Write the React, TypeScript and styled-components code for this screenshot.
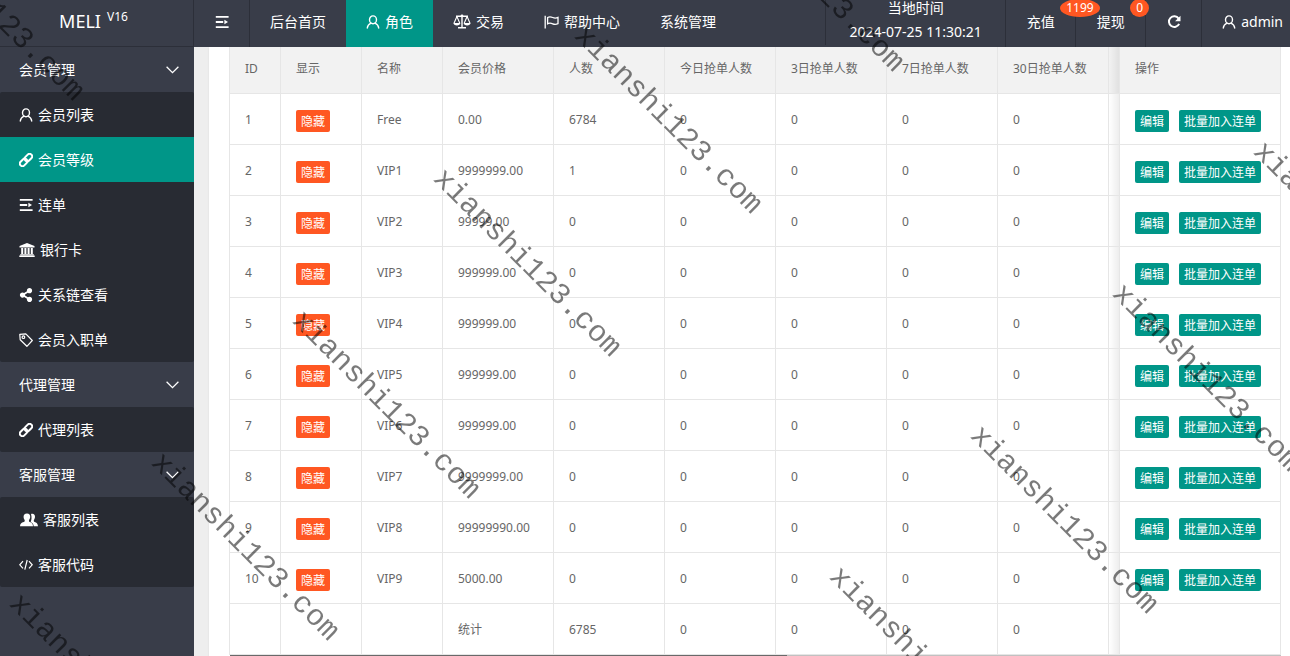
import React from "react";
import styled, { createGlobalStyle, css } from "styled-components";
import { FaShareAlt } from "react-icons/fa";

const GlobalStyle = createGlobalStyle`
  *, *::before, *::after { box-sizing: border-box; }
  body {
    margin: 0;
    background: #eeeeee;
    color: #666666;
    font: 14px/24px "Noto Sans", "Noto Sans CJK SC", sans-serif;
    overflow: hidden;
  }
  button { font: inherit; border: 0; margin: 0; padding: 0; cursor: pointer; }
  a { color: inherit; text-decoration: none; }
`;

const Shell = styled.div`
  display: grid;
  grid-template: 47px minmax(0, 1fr) / 194px minmax(0, 1fr);
  height: 100vh;
`;

const Logo = styled.h1`
  display: flex;
  justify-content: center;
  margin: 0;
  padding-right: 6px;
  background: #393d49;
  border-right: 1px solid #2c2f39;
  border-bottom: 1px solid #2c2f39;
  color: #ffffff;
  font-size: 18px;
  font-weight: 400;
  line-height: 42px;
  gap: 6px;
`;

const Version = styled.small`
  font-size: 12px;
  line-height: 33px;
`;

const TopBar = styled.header`
  display: flex;
  justify-content: space-between;
  background: #393d49;
  color: #ffffff;
`;

const BarGroup = styled.nav`
  display: flex;
`;

const iconTextCss = css`
  display: flex;
  align-items: center;
  svg { flex: none; }
`;

const NavLink = styled.a<{ $active?: boolean }>`
  ${iconTextCss}
  gap: 5px;
  padding: 0 20px 4px;
  background: ${(p) => (p.$active ? "#009688" : "transparent")};
  white-space: nowrap;
`;

const IconButton = styled.button<{ $side: "left" | "right" }>`
  display: flex;
  align-items: center;
  justify-content: center;
  width: 56px;
  padding-bottom: 4px;
  background: transparent;
  color: #ffffff;
  border-${(p) => p.$side}: 1px solid #2c2f39;
`;

const Clock = styled.div`
  display: flex;
  flex-direction: column;
  align-items: center;
  justify-content: center;
  width: 180px;
  height: 45px;
  padding-bottom: 5px;
  border-left: 1px solid #2c2f39;
  white-space: nowrap;
`;

const CountLink = styled.a`
  position: relative;
  display: flex;
  align-items: center;
  justify-content: center;
  width: 70px;
  padding-bottom: 4px;
  border-left: 1px solid #2c2f39;
`;

const Badge = styled.span`
  position: absolute;
  top: -1px;
  left: calc(100% - 15px);
  z-index: 1;
  padding: 0 6px;
  border-radius: 50%;
  background: #ff5722;
  font-size: 12px;
  line-height: 18px;
`;

const Account = styled.a`
  ${iconTextCss}
  gap: 5px;
  padding: 0 7px 4px 20px;
  border-left: 1px solid #2c2f39;
`;

const Sidebar = styled.nav`
  background: #393d49;
  color: #ffffff;
  overflow: hidden;
`;

const GroupButton = styled.button`
  display: flex;
  align-items: center;
  justify-content: space-between;
  width: 100%;
  height: 45px;
  padding: 0 15px 0 19px;
  background: transparent;
  color: #ffffff;
`;

const SubMenu = styled.ul`
  margin: 0;
  padding: 0;
  list-style: none;
  background: #282b33;
  border-radius: 2px;
`;

const SideLink = styled.a<{ $active?: boolean }>`
  ${iconTextCss}
  gap: 5px;
  height: 45px;
  padding: 0 19px;
  background: ${(p) => (p.$active ? "#009688" : "transparent")};
`;

const Main = styled.main`
  padding-left: 15px;
  overflow: hidden;
`;

const Panel = styled.section`
  min-height: 100%;
  padding: 0 9px 0 20px;
  background: #ffffff;
  box-shadow: 0 1px 2px rgba(0, 0, 0, 0.08);
`;

const DataTable = styled.table`
  width: 100%;
  table-layout: fixed;
  border-collapse: separate;
  border-spacing: 0;
  border-left: 1px solid #e6e6e6;
  font-size: 12px;
  line-height: 20px;
`;

const HeadCell = styled.th`
  height: 47px;
  padding: 0 15px 2px;
  background: #f2f2f2;
  border-right: 1px solid #e6e6e6;
  border-bottom: 1px solid #e6e6e6;
  font-weight: 400;
  text-align: left;
  white-space: nowrap;
`;

const Cell = styled.td`
  height: 51px;
  padding: 2px 15px 0;
  border-right: 1px solid #e6e6e6;
  border-bottom: 1px solid #e6e6e6;
  white-space: nowrap;
`;

const shadowCss = css`
  padding: 0;
  background-image: linear-gradient(to right, rgba(0, 0, 0, 0), rgba(0, 0, 0, 0.07));
`;
const HeadShade = styled(HeadCell)`${shadowCss}`;
const CellShade = styled(Cell)`${shadowCss}`;

const Actions = styled.div`
  display: flex;
  gap: 10px;
  padding-top: 1px;
`;

const TinyButton = styled.button<{ $tone: "danger" | "primary" }>`
  height: 22px;
  padding: 1px 5px 0;
  border-radius: 2px;
  background: ${(p) => (p.$tone === "danger" ? "#ff5722" : "#009688")};
  color: #ffffff;
  line-height: 22px;
`;

const ScrollTrack = styled.div`
  height: 16px;
  margin-left: 1px;
  background: #c1c1c1;
`;

const ScrollThumb = styled.div`
  width: 53%;
  height: 100%;
  background: #696969;
`;

const WatermarkLayer = styled.div`
  position: fixed;
  inset: 0;
  z-index: 10;
  overflow: hidden;
  pointer-events: none;
`;

const Watermark = styled.span`
  position: absolute;
  color: rgba(0, 0, 0, 0.52);
  font: 30px/36px "Liberation Mono", monospace;
  white-space: nowrap;
  transform: translate(-50%, -50%) rotate(45deg);
`;

const UserIcon = () => (
  <svg width="14" height="14" viewBox="0 0 14 14" fill="none" stroke="currentColor" strokeWidth="1.4" strokeLinecap="round" aria-hidden="true">
    <ellipse cx="7" cy="4.8" rx="3.5" ry="3.9" />
    <path d="M5 8.1C2.8 9 1.5 10.6 1.3 13M9 8.1c2.2.9 3.5 2.5 3.7 4.9" />
  </svg>
);

const ShrinkIcon = () => (
  <svg width="14" height="14" viewBox="0 0 14 14" fill="none" stroke="currentColor" strokeWidth="1.8" aria-hidden="true">
    <path d="M.8 1.9h12.8M.8 7h7.4M.8 12.1h12.8" />
    <path d="M9.4 4.8 13 7l-3.6 2.2Z" fill="currentColor" stroke="none" />
  </svg>
);

const ScaleIcon = () => (
  <svg width="18" height="15" viewBox="0 0 18 15" fill="none" stroke="currentColor" strokeWidth="1.1" aria-hidden="true">
    <path d="M3 2.3h12M9 1v12.5M5 13.8h8" strokeWidth="1.4" />
    <path d="M3.9 2.5 1 9.2M3.9 2.5l2.9 6.7M14.1 2.5l-2.9 6.7M14.1 2.5 17 9.2" />
    <path d="M.4 9h7c-.2 1.6-1.5 2.5-3.5 2.5S.6 10.6.4 9ZM10.6 9h7c-.2 1.6-1.5 2.5-3.5 2.5s-3.3-.9-3.5-2.5Z" fill="currentColor" stroke="none" />
    <circle cx="9" cy="1.9" r="1.4" fill="currentColor" stroke="none" />
  </svg>
);

const FlagIcon = () => (
  <svg width="15" height="14" viewBox="0 0 15 14" fill="none" stroke="currentColor" strokeWidth="1.3" aria-hidden="true">
    <path d="M1.2.8v12.6M3.6 2.5c2-1.2 3.4-.8 5.1 0 1.8.8 3.3.8 5.3-.1v6.3c-2 .9-3.5.9-5.3.1-1.7-.8-3.1-1.2-5.1 0Z" />
  </svg>
);

const LinkIcon = () => (
  <svg width="14" height="14" viewBox="0 0 14 14" fill="none" stroke="currentColor" strokeWidth="2" aria-hidden="true">
    <g transform="rotate(-45 7 7)">
      <rect x="-.6" y="4.4" width="8.4" height="5.2" rx="2.6" />
      <rect x="6.2" y="4.4" width="8.4" height="5.2" rx="2.6" />
    </g>
  </svg>
);

const BankIcon = () => (
  <svg width="16" height="14" viewBox="0 0 16 14" fill="currentColor" aria-hidden="true">
    <path d="M8 0 15.5 3v1.4H.5V3ZM2.2 5h2v6h-2ZM5.4 5h2v6h-2ZM8.6 5h2v6h-2ZM11.8 5h2v6h-2ZM1.2 11.2h13.6v1H1.2ZM.3 12.6h15.4V14H.3Z" />
  </svg>
);

const TagIcon = () => (
  <svg width="14" height="14" viewBox="0 0 14 14" fill="none" stroke="currentColor" strokeWidth="1.2" strokeLinejoin="round" aria-hidden="true">
    <path d="M.8 1.4 6.8.8l6.5 6.7-5.4 5.8L1.2 6.8Z" />
    <circle cx="4.4" cy="4.2" r="1.3" />
  </svg>
);

const UsersIcon = () => (
  <svg width="19" height="14" viewBox="0 0 19 14" fill="currentColor" aria-hidden="true">
    <path d="M12 1.1c2.2-1.1 4.3.5 4 3-.2 1.5-.7 2.3-1.1 2.9-.3.8 0 1.6.8 2 1.9.7 3 1.4 3.3 4.2h-4.3c-.2-2.1-1-3.1-3-4.2.6-1.4 1.4-4.7.3-7.9Z" />
    <path d="M8 .5c2.2 0 3.5 1.6 3.2 3.8-.2 1.3-.6 2-1.1 2.6-.4.8-.1 1.7.7 2.1 2 .8 3 1.5 3.2 4.2H1c.2-2.7 1.2-3.4 3.8-4.2.8-.4 1.2-1.3.8-2.1-.5-.6-.9-1.3-1-2.6C4.3 2.1 5.7.5 8 .5Z" />
  </svg>
);

const CodeIcon = () => (
  <svg width="14" height="14" viewBox="0 0 14 14" fill="none" stroke="currentColor" strokeWidth="1.2" aria-hidden="true">
    <path d="M4 3.2.8 6.8 4 10.4M10 3.2l3.2 3.6-3.2 3.6M8.2 2 5.8 11.6" />
  </svg>
);

const RefreshIcon = () => (
  <svg width="14" height="14" viewBox="0 0 14 14" fill="none" stroke="currentColor" strokeWidth="2" aria-hidden="true">
    <path d="M11.6 3.6A5.3 5.3 0 1 0 12.1 8.8" />
    <path d="M13.5.8v5.4H8.1Z" fill="currentColor" stroke="none" />
  </svg>
);

const ChevronIcon = () => (
  <svg width="13" height="8" viewBox="0 0 13 8" fill="none" stroke="currentColor" strokeWidth="1.3" aria-hidden="true">
    <path d="m.6.8 5.9 5.8L12.4.8" />
  </svg>
);

interface MenuItem {
  label: string;
  icon?: React.ReactNode;
  active?: boolean;
}

const topMenu: MenuItem[] = [
  { label: "后台首页" },
  { label: "角色", icon: <UserIcon />, active: true },
  { label: "交易", icon: <ScaleIcon /> },
  { label: "帮助中心", icon: <FlagIcon /> },
  { label: "系统管理" },
];

const sideMenu: { title: string; items: MenuItem[] }[] = [
  {
    title: "会员管理",
    items: [
      { label: "会员列表", icon: <UserIcon /> },
      { label: "会员等级", icon: <LinkIcon />, active: true },
      { label: "连单", icon: <ShrinkIcon /> },
      { label: "银行卡", icon: <BankIcon /> },
      { label: "关系链查看", icon: <FaShareAlt size={14} /> },
      { label: "会员入职单", icon: <TagIcon /> },
    ],
  },
  { title: "代理管理", items: [{ label: "代理列表", icon: <LinkIcon /> }] },
  {
    title: "客服管理",
    items: [
      { label: "客服列表", icon: <UsersIcon /> },
      { label: "客服代码", icon: <CodeIcon /> },
    ],
  },
];

const columns = [
  { title: "ID", width: 51 },
  { title: "显示", width: 81 },
  { title: "名称", width: 81 },
  { title: "会员价格", width: 111 },
  { title: "人数", width: 111 },
  { title: "今日抢单人数", width: 111 },
  { title: "3日抢单人数", width: 111 },
  { title: "7日抢单人数", width: 111 },
  { title: "30日抢单人数", width: 111 },
];

const levels = [
  { name: "Free", price: "0.00", people: 6784 },
  { name: "VIP1", price: "9999999.00", people: 1 },
  { name: "VIP2", price: "99999.00", people: 0 },
  { name: "VIP3", price: "999999.00", people: 0 },
  { name: "VIP4", price: "999999.00", people: 0 },
  { name: "VIP5", price: "999999.00", people: 0 },
  { name: "VIP6", price: "999999.00", people: 0 },
  { name: "VIP7", price: "9999999.00", people: 0 },
  { name: "VIP8", price: "99999990.00", people: 0 },
  { name: "VIP9", price: "5000.00", people: 0 },
];

const periods = ["today", "3d", "7d", "30d"];

const marks = [
  [-10, 7], [810, -22], [668, 120], [527, 263], [386, 405], [245, 547], [103, 688],
  [1347, 236], [1206, 378], [1064, 520], [923, 661],
];

export default function App() {
  return (
    <>
      <GlobalStyle />
      <Shell>
        <Logo>
          MELI <Version>V16</Version>
        </Logo>
        <TopBar>
          <BarGroup>
            <IconButton $side="right" type="button" aria-label="收起菜单">
              <ShrinkIcon />
            </IconButton>
            {topMenu.map((item) => (
              <NavLink key={item.label} href="#" $active={item.active}>
                {item.icon}
                {item.label}
              </NavLink>
            ))}
          </BarGroup>
          <BarGroup>
            <Clock>
              <span>当地时间</span>
              <time>2024-07-25 11:30:21</time>
            </Clock>
            <CountLink href="#">
              充值<Badge>1199</Badge>
            </CountLink>
            <CountLink href="#">
              提现<Badge>0</Badge>
            </CountLink>
            <IconButton $side="left" type="button" aria-label="刷新">
              <RefreshIcon />
            </IconButton>
            <Account href="#">
              <UserIcon />
              admin
            </Account>
          </BarGroup>
        </TopBar>
        <Sidebar>
          {sideMenu.map((group) => (
            <React.Fragment key={group.title}>
              <GroupButton type="button">
                {group.title}
                <ChevronIcon />
              </GroupButton>
              <SubMenu>
                {group.items.map((item) => (
                  <li key={item.label}>
                    <SideLink href="#" $active={item.active}>
                      {item.icon}
                      {item.label}
                    </SideLink>
                  </li>
                ))}
              </SubMenu>
            </React.Fragment>
          ))}
        </Sidebar>
        <Main>
          <Panel>
            <DataTable>
              <colgroup>
                {columns.map((c) => (
                  <col key={c.title} width={c.width} />
                ))}
                <col />
                <col width={161} />
              </colgroup>
              <thead>
                <tr>
                  {columns.map((c) => (
                    <HeadCell key={c.title}>{c.title}</HeadCell>
                  ))}
                  <HeadShade />
                  <HeadCell>操作</HeadCell>
                </tr>
              </thead>
              <tbody>
                {levels.map((level, i) => (
                  <tr key={level.name}>
                    <Cell>{i + 1}</Cell>
                    <Cell>
                      <Actions>
                        <TinyButton type="button" $tone="danger">隐藏</TinyButton>
                      </Actions>
                    </Cell>
                    <Cell>{level.name}</Cell>
                    <Cell>{level.price}</Cell>
                    <Cell>{level.people}</Cell>
                    {periods.map((p) => (
                      <Cell key={p}>0</Cell>
                    ))}
                    <CellShade />
                    <Cell>
                      <Actions>
                        <TinyButton type="button" $tone="primary">编辑</TinyButton>
                        <TinyButton type="button" $tone="primary">批量加入连单</TinyButton>
                      </Actions>
                    </Cell>
                  </tr>
                ))}
                <tr>
                  <Cell />
                  <Cell />
                  <Cell />
                  <Cell>统计</Cell>
                  <Cell>6785</Cell>
                  {periods.map((p) => (
                    <Cell key={p}>0</Cell>
                  ))}
                  <CellShade />
                  <Cell />
                </tr>
              </tbody>
            </DataTable>
            <ScrollTrack>
              <ScrollThumb />
            </ScrollTrack>
          </Panel>
        </Main>
      </Shell>
      <WatermarkLayer aria-hidden="true">
        {marks.map(([x, y]) => (
          <Watermark key={`${x},${y}`} style={{ left: x, top: y }}>
            xianshi123.com
          </Watermark>
        ))}
      </WatermarkLayer>
    </>
  );
}
